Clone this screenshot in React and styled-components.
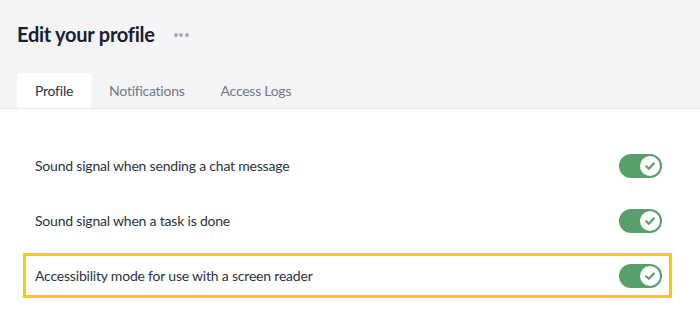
import React, { useState } from "react";
import styled, { createGlobalStyle } from "styled-components";

const GlobalStyle = createGlobalStyle`
  html, body { margin: 0; padding: 0; background: #ffffff; }
  body { font-family: Lato, "Noto Sans", sans-serif; color: #2b333f; }
  * { box-sizing: border-box; }
`;

const Page = styled.div`
  width: 700px;
  min-height: 329px;
  background: #ffffff;
`;

const Header = styled.header`
  background: #f4f4f6;
  padding: 22px 17px 0;
  border-bottom: 1px solid #e7e7ea;
`;

const TitleRow = styled.div`
  display: flex;
  align-items: center;
  gap: 19px;
  height: 24px;
`;

const Title = styled.h1`
  margin: 0;
  font-size: 20px;
  font-weight: 700;
  color: #18202e;
  letter-spacing: -0.25px;
`;

const MoreButton = styled.button`
  display: flex;
  gap: 1.5px;
  padding: 0;
  border: 0;
  background: none;
  cursor: pointer;
  margin-top: 1px;
`;

const Dot = styled.span`
  width: 4px;
  height: 4px;
  border-radius: 50%;
  background: #a9abb0;
`;

const Tabs = styled.nav`
  display: flex;
  margin-top: 27px;
`;

const Tab = styled.button`
  height: 35px;
  padding: 0 18px;
  border: 0;
  border-radius: 4px 4px 0 0;
  background: ${(p) => (p.$active ? "#ffffff" : "transparent")};
  color: ${(p) => (p.$active ? "#2d3440" : "#6f7a88")};
  font-family: inherit;
  font-size: 14px;
  letter-spacing: -0.25px;
  cursor: pointer;
`;

const Content = styled.section`
  display: flex;
  flex-direction: column;
  gap: 10px;
  padding: 34px 28px 0 23px;
`;

const Row = styled.div`
  display: flex;
  align-items: center;
  justify-content: space-between;
  height: 45px;
  padding: 0 7px 0 9px;
  border: 3px solid ${(p) => (p.$focused ? "#f8ca00" : "transparent")};
`;

const Label = styled.span`
  font-size: 14px;
  letter-spacing: -0.2px;
  color: #2b333f;
`;

const Switch = styled.button`
  position: relative;
  width: 43px;
  height: 24px;
  padding: 0;
  border: 0;
  border-radius: 12px;
  background: ${(p) => (p.$on ? "#589f6b" : "#c5c8cd")};
  cursor: pointer;
`;

const Knob = styled.span`
  position: absolute;
  top: 2px;
  left: ${(p) => (p.$on ? "21px" : "2px")};
  width: 20px;
  height: 20px;
  border-radius: 50%;
  background: #ffffff;
  display: flex;
  align-items: center;
  justify-content: center;
`;

function Toggle({ on, onClick }) {
  return (
    <Switch $on={on} onClick={onClick} role="switch" aria-checked={on}>
      <Knob $on={on}>
        {on && (
          <svg width="12" height="12" viewBox="0 0 12 12">
            <path
              d="M2.2 6.3 L4.9 8.8 L9.8 3.4"
              fill="none"
              stroke="#589f6b"
              strokeWidth="2.2"
              strokeLinecap="round"
              strokeLinejoin="round"
            />
          </svg>
        )}
      </Knob>
    </Switch>
  );
}

const settings = [
  { id: 1, label: "Sound signal when sending a chat message" },
  { id: 2, label: "Sound signal when a task is done" },
  { id: 3, label: "Accessibility mode for use with a screen reader", focused: true },
];

export default function App() {
  const [tab, setTab] = useState("Profile");
  const [values, setValues] = useState({ 1: true, 2: true, 3: true });
  return (
    <Page>
      <GlobalStyle />
      <Header>
        <TitleRow>
          <Title>Edit your profile</Title>
          <MoreButton aria-label="More">
            <Dot />
            <Dot />
            <Dot />
          </MoreButton>
        </TitleRow>
        <Tabs>
          {["Profile", "Notifications", "Access Logs"].map((t) => (
            <Tab key={t} $active={tab === t} onClick={() => setTab(t)}>
              {t}
            </Tab>
          ))}
        </Tabs>
      </Header>
      <Content>
        {settings.map((s) => (
          <Row key={s.id} $focused={s.focused}>
            <Label>{s.label}</Label>
            <Toggle
              on={values[s.id]}
              onClick={() => setValues((v) => ({ ...v, [s.id]: !v[s.id] }))}
            />
          </Row>
        ))}
      </Content>
    </Page>
  );
}
